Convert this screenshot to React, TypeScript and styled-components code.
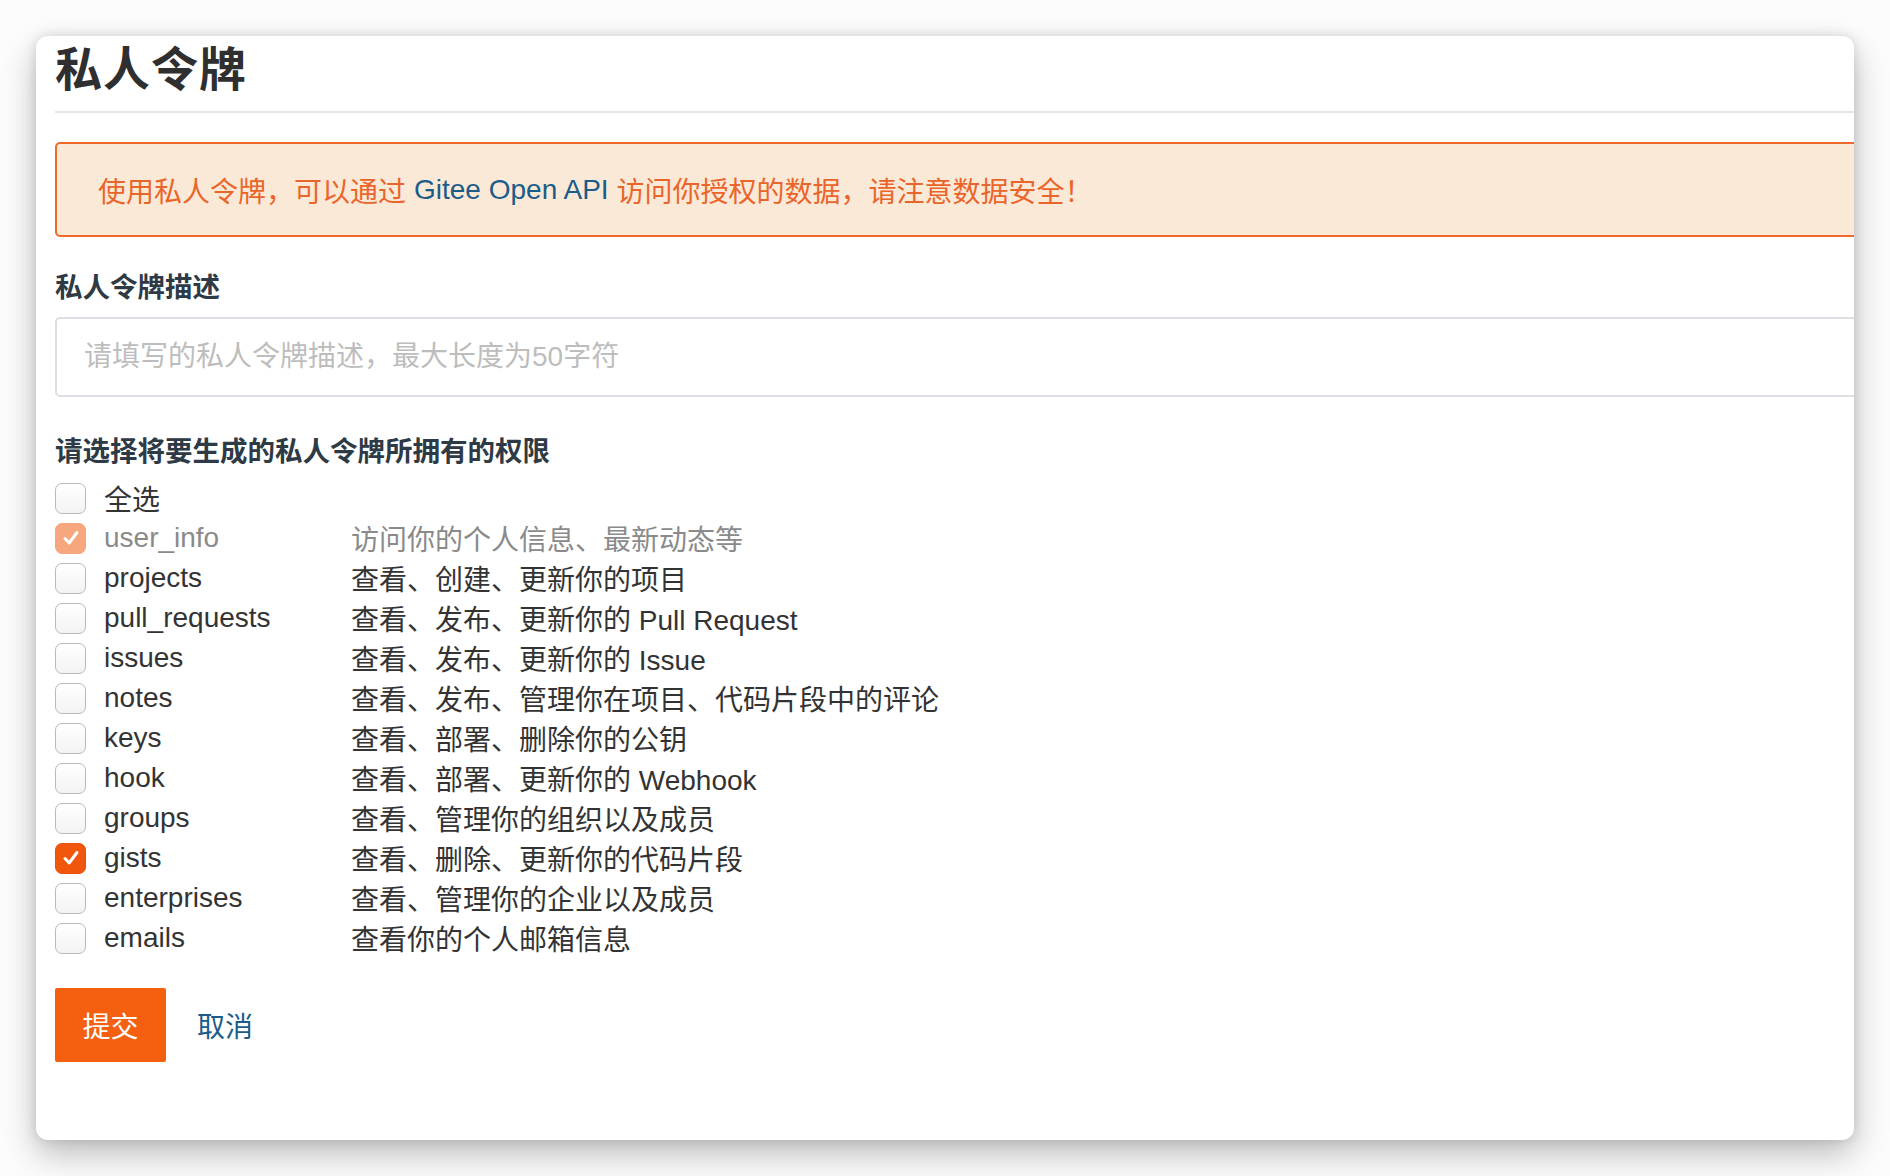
import React, { useState } from 'react';
import styled, { createGlobalStyle } from 'styled-components';

const GlobalStyle = createGlobalStyle`
  html, body {
    margin: 0;
    padding: 0;
    background: #ffffff;
  }
  body {
    font-family: "Helvetica Neue", "Liberation Sans", "Noto Sans CJK SC", sans-serif;
    color: #333;
  }
`;

const Page = styled.div`
  width: 1890px;
  height: 1176px;
  box-sizing: border-box;
  padding: 36px;
  background: #fcfcfc;
`;

const Card = styled.div`
  width: 1818px;
  height: 1104px;
  background: #fff;
  border-radius: 12px;
  overflow: hidden;
  box-shadow: 0 14px 34px rgba(0, 0, 0, 0.26), 0 0 12px rgba(0, 0, 0, 0.12);
`;

const Inner = styled.div`
  width: 1860px;
  padding-left: 19px;
  box-sizing: border-box;
`;

const Title = styled.h1`
  margin: 0;
  font-size: 47px;
  line-height: 68px;
  font-weight: 600;
  color: #2f2f2f;
  letter-spacing: 1px;
  padding-bottom: 7px;
  border-bottom: 2px solid #e6e6e6;
`;

const Alert = styled.div`
  margin-top: 29px;
  height: 95px;
  box-sizing: border-box;
  border: 2.5px solid #ee6a2c;
  border-radius: 5px;
  background: #fbe9d8;
  display: flex;
  align-items: center;
  padding-left: 41px;
  font-size: 28px;
  color: #ea6529;
`;

const Link = styled.a`
  color: #1b5c89;
  text-decoration: none;
  margin: 0 8px;
`;

const Label = styled.div<{ $top: number }>`
  margin-top: ${({ $top }) => $top}px;
  font-size: 27.5px;
  line-height: 40px;
  font-weight: 700;
  color: #2e3a45;
`;

const Input = styled.input`
  display: block;
  margin-top: 9px;
  width: 100%;
  height: 80px;
  box-sizing: border-box;
  border: 2px solid #dcdfe3;
  border-radius: 5px;
  padding: 0 27px;
  font-family: inherit;
  font-size: 28px;
  color: #333;
  outline: none;
  &::placeholder {
    color: #bdbdbd;
  }
`;

const List = styled.div`
  margin-top: 6px;
  display: flex;
  flex-direction: column;
`;

const Row = styled.label<{ $muted?: boolean }>`
  display: grid;
  grid-template-columns: 32px 230px auto;
  column-gap: 17px;
  align-items: center;
  height: 40px;
  font-size: 28px;
  color: ${({ $muted }) => ($muted ? '#8a8a8a' : '#333')};
  cursor: pointer;
`;

const Box = styled.span<{ $checked?: boolean; $disabled?: boolean }>`
  width: 31px;
  height: 31px;
  box-sizing: border-box;
  border-radius: 7px;
  display: flex;
  align-items: center;
  justify-content: center;
  background: ${({ $checked, $disabled }) =>
    $checked ? ($disabled ? '#f6a77d' : '#f0560c') : 'linear-gradient(#ffffff, #f3f3f3)'};
  border: ${({ $checked, $disabled }) =>
    $checked ? ($disabled ? '1px solid #f6a77d' : '1px solid #e8510a') : '1.5px solid #b9b9b9'};
`;

const Actions = styled.div`
  margin-top: 30px;
  display: flex;
  align-items: center;
  gap: 31px;
`;

const Submit = styled.button`
  width: 111px;
  height: 74px;
  border: 0;
  border-radius: 2px;
  background: #f4600f;
  color: #fff;
  font-family: inherit;
  font-size: 28px;
  cursor: pointer;
`;

const Cancel = styled.a`
  color: #1b5c89;
  font-size: 28px;
  text-decoration: none;
  cursor: pointer;
`;

const Check = () => (
  <svg width="18" height="18" viewBox="0 0 18 18">
    <path d="M3 9.5 L7.2 14 L15 3.5" fill="none" stroke="#fff" strokeWidth="3" strokeLinecap="round" strokeLinejoin="round" />
  </svg>
);

const scopes = [
  { key: 'user_info', desc: '访问你的个人信息、最新动态等', locked: true },
  { key: 'projects', desc: '查看、创建、更新你的项目' },
  { key: 'pull_requests', desc: '查看、发布、更新你的 Pull Request' },
  { key: 'issues', desc: '查看、发布、更新你的 Issue' },
  { key: 'notes', desc: '查看、发布、管理你在项目、代码片段中的评论' },
  { key: 'keys', desc: '查看、部署、删除你的公钥' },
  { key: 'hook', desc: '查看、部署、更新你的 Webhook' },
  { key: 'groups', desc: '查看、管理你的组织以及成员' },
  { key: 'gists', desc: '查看、删除、更新你的代码片段' },
  { key: 'enterprises', desc: '查看、管理你的企业以及成员' },
  { key: 'emails', desc: '查看你的个人邮箱信息' },
];

export default function App() {
  const [checked, setChecked] = useState<Record<string, boolean>>({ user_info: true, gists: true });

  const toggle = (key: string) => {
    if (key === 'user_info') return;
    setChecked((c) => ({ ...c, [key]: !c[key] }));
  };

  return (
    <>
      <GlobalStyle />
      <Page>
        <Card>
          <Inner>
            <Title>私人令牌</Title>
            <Alert>
              使用私人令牌，可以通过<Link>Gitee Open API</Link>访问你授权的数据，请注意数据安全！
            </Alert>
            <Label $top={31}>私人令牌描述</Label>
            <Input placeholder="请填写的私人令牌描述，最大长度为50字符" />
            <Label $top={35}>请选择将要生成的私人令牌所拥有的权限</Label>
            <List>
              <Row>
                <Box />
                <span>全选</span>
                <span />
              </Row>
              {scopes.map((s) => (
                <Row key={s.key} $muted={s.locked} onClick={() => toggle(s.key)}>
                  <Box $checked={!!checked[s.key]} $disabled={s.locked}>
                    {checked[s.key] && <Check />}
                  </Box>
                  <span>{s.key}</span>
                  <span>{s.desc}</span>
                </Row>
              ))}
            </List>
            <Actions>
              <Submit>提交</Submit>
              <Cancel>取消</Cancel>
            </Actions>
          </Inner>
        </Card>
      </Page>
    </>
  );
}
